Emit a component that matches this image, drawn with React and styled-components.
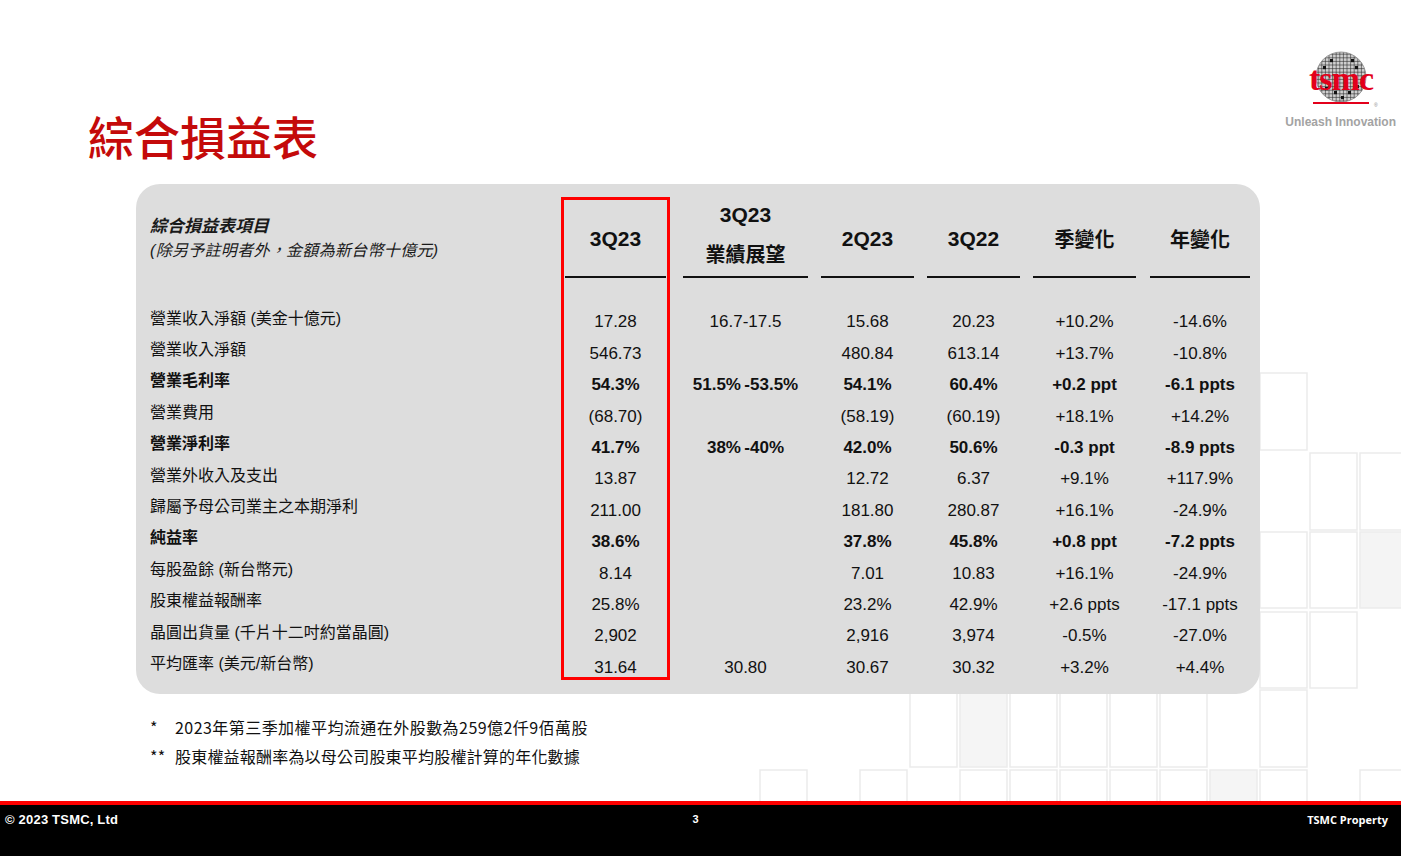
import React from 'react';
import styled, { createGlobalStyle } from 'styled-components';

const GlobalStyle = createGlobalStyle`
  html, body { margin: 0; padding: 0; background: #ffffff; }
  body { font-family: "Liberation Sans", "Noto Sans CJK TC", sans-serif; color: #111; }
  * { box-sizing: border-box; }
`;

const Page = styled.div`
  position: relative;
  width: 1401px;
  height: 856px;
  overflow: hidden;
  display: flex;
  flex-direction: column;
  background: #ffffff;
`;

const Backdrop = styled.svg`
  position: absolute;
  left: 0;
  top: 0;
  width: 1401px;
  height: 856px;
  pointer-events: none;
`;

const Content = styled.div`
  position: relative;
  z-index: 1;
  display: flex;
  flex-direction: column;
  flex: 1;
`;

const Header = styled.header`
  display: flex;
  justify-content: space-between;
  align-items: flex-start;
  height: 184px;
  flex-shrink: 0;
`;

const Title = styled.h1`
  margin: 112px 0 0 88px;
  font-family: "Noto Sans CJK TC", sans-serif;
  font-size: 46px;
  line-height: 46px;
  font-weight: 500;
  color: #c40a0a;
`;

const LogoBlock = styled.div`
  margin: 50px 5px 0 0;
  display: flex;
  flex-direction: column;
  align-items: center;
`;

const Tagline = styled.div`
  margin-top: 7px;
  font-family: "Liberation Sans", sans-serif;
  font-size: 12px;
  line-height: 14px;
  font-weight: 700;
  color: #a3a3a3;
`;

const Panel = styled.section`
  margin-left: 136px;
  width: 1124px;
  height: 510px;
  flex-shrink: 0;
  padding: 13px 0 14px 0;
  background: #dddddd;
  border-radius: 24px;
  display: flex;
`;

const LabelColumn = styled.div`
  width: 425px;
  flex-shrink: 0;
  padding: 3px 0 0 14px;
  display: flex;
  flex-direction: column;
`;

const LabelHead = styled.div`
  height: 78px;
  flex-shrink: 0;
  display: flex;
  flex-direction: column;
  justify-content: center;
  font-style: italic;
  color: #1a1a1a;
`;

const LabelHeadTitle = styled.div`
  font-size: 17px;
  line-height: 24px;
  font-weight: 700;
`;

const LabelHeadNote = styled.div`
  font-size: 16px;
  line-height: 24px;
  letter-spacing: 0.3px;
`;

const DataColumn = styled.div`
  width: ${p => p.$width}px;
  flex-shrink: 0;
  margin-left: ${p => p.$gap}px;
  border: ${p => (p.$highlight ? '3px solid #ff0000' : 'none')};
  padding-top: ${p => (p.$highlight ? 0 : 3)}px;
  display: flex;
  flex-direction: column;
`;

const ColHead = styled.div`
  flex-shrink: 0;
  box-sizing: content-box;
  height: ${p => 76 - (p.$lift || 0)}px;
  padding-bottom: ${p => p.$lift || 0}px;
  margin: 0 ${p => (p.$inset ? 1 : 0)}px;
  border-bottom: 2px solid #111;
  display: flex;
  flex-direction: column;
  align-items: center;
  justify-content: center;
`;

const HeadLatin = styled.div`
  font-family: "Liberation Sans", sans-serif;
  font-size: 21px;
  line-height: 39px;
  font-weight: 700;
  color: #111;
`;

const HeadCjk = styled.div`
  font-family: "Noto Sans CJK TC", sans-serif;
  font-size: 20px;
  line-height: 39px;
  font-weight: 700;
  color: #111;
`;

const Rows = styled.div`
  flex-shrink: 0;
  margin-top: ${p => p.$offset}px;
  display: flex;
  flex-direction: column;
`;

const Cell = styled.div`
  flex-shrink: 0;
  height: 31.4px;
  display: flex;
  align-items: center;
  justify-content: ${p => (p.$align === 'left' ? 'flex-start' : 'center')};
  white-space: nowrap;
  font-size: ${p => p.$size}px;
  font-weight: ${p => (p.$bold ? 700 : 400)};
  color: #111;
`;

const Notes = styled.div`
  margin: 19px 0 0 150px;
  font-family: "Noto Sans CJK TC", sans-serif;
  font-size: 16px;
  line-height: 29px;
  color: #111;
`;

const NoteLine = styled.div`
  display: grid;
  grid-template-columns: 25px auto;
  letter-spacing: ${p => p.$track}px;
`;

const Footer = styled.footer`
  margin-top: auto;
  height: 55px;
  flex-shrink: 0;
  border-top: 4px solid #ff0000;
  background: #000;
  color: #fff;
  display: grid;
  grid-template-columns: 1fr auto 1fr;
  align-items: start;
  padding: 7px 13px 0 5px;
`;

const FootLeft = styled.div`
  font-family: "Liberation Sans", sans-serif;
  font-size: 13px;
  line-height: 15px;
  font-weight: 700;
  letter-spacing: 0.2px;
`;

const FootPage = styled.div`
  font-family: "Liberation Sans", sans-serif;
  font-size: 11px;
  line-height: 15px;
  font-weight: 700;
  margin-right: 2px;
`;

const FootRight = styled.div`
  justify-self: end;
  font-family: "Open Sans", sans-serif;
  font-size: 11px;
  line-height: 15px;
  font-weight: 700;
`;

const columns = [
  { width: 109, gap: 0, highlight: true, head: [['3Q23', 'latin']] },
  { width: 125, gap: 13, head: [['3Q23', 'latin'], ['業績展望', 'cjk']], lift: 9 },
  { width: 93, gap: 13, head: [['2Q23', 'latin']] },
  { width: 93, gap: 13, head: [['3Q22', 'latin']] },
  { width: 103, gap: 13, head: [['季變化', 'cjk']] },
  { width: 100, gap: 14, head: [['年變化', 'cjk']] },
];

const rows = [
  { label: '營業收入淨額 (美金十億元)', v: ['17.28', '16.7-17.5', '15.68', '20.23', '+10.2%', '-14.6%'] },
  { label: '營業收入淨額', v: ['546.73', '', '480.84', '613.14', '+13.7%', '-10.8%'] },
  { label: '營業毛利率', bold: true, v: ['54.3%', '51.5%\u2009-53.5%', '54.1%', '60.4%', '+0.2 ppt', '-6.1 ppts'] },
  { label: '營業費用', v: ['(68.70)', '', '(58.19)', '(60.19)', '+18.1%', '+14.2%'] },
  { label: '營業淨利率', bold: true, v: ['41.7%', '38%\u2009-40%', '42.0%', '50.6%', '-0.3 ppt', '-8.9 ppts'] },
  { label: '營業外收入及支出', v: ['13.87', '', '12.72', '6.37', '+9.1%', '+117.9%'] },
  { label: '歸屬予母公司業主之本期淨利', v: ['211.00', '', '181.80', '280.87', '+16.1%', '-24.9%'] },
  { label: '純益率', bold: true, v: ['38.6%', '', '37.8%', '45.8%', '+0.8 ppt', '-7.2 ppts'] },
  { label: '每股盈餘 (新台幣元)', v: ['8.14', '', '7.01', '10.83', '+16.1%', '-24.9%'] },
  { label: '股東權益報酬率', v: ['25.8%', '', '23.2%', '42.9%', '+2.6 ppts', '-17.1 ppts'] },
  { label: '晶圓出貨量 (千片十二吋約當晶圓)', v: ['2,902', '', '2,916', '3,974', '-0.5%', '-27.0%'] },
  { label: '平均匯率 (美元/新台幣)', v: ['31.64', '30.80', '30.67', '30.32', '+3.2%', '+4.4%'] },
];

const tiles = [
  [1260, 373, 47, 77],
  [1310, 453, 47, 77], [1360, 453, 45, 77],
  [1260, 532, 47, 76], [1310, 532, 47, 76], [1360, 532, 45, 76, '#f4f4f4'],
  [1260, 612, 47, 76], [1310, 612, 47, 76],
  [910, 690, 47, 77], [960, 690, 47, 77, '#f5f5f5'], [1010, 690, 47, 77], [1060, 690, 47, 77],
  [1110, 690, 47, 77], [1160, 690, 47, 77], [1260, 690, 47, 77],
  [760, 770, 47, 34], [860, 770, 47, 34], [960, 770, 47, 34], [1010, 770, 47, 34],
  [1060, 770, 47, 34], [1110, 770, 47, 34], [1160, 770, 47, 34], [1210, 770, 47, 34, '#f5f5f5'],
  [1260, 770, 47, 34], [1360, 770, 45, 34],
];

function Logo() {
  const lines = [];
  for (let i = -30; i <= 30; i += 3.6) {
    lines.push(<line key={'v' + i} x1={40 + i} y1="0" x2={40 + i} y2="60" />);
    lines.push(<line key={'h' + i} x1="0" y1={27 + i} x2="80" y2={27 + i} />);
  }
  const dies = [[29, 9], [50, 9], [22, 16], [54, 16], [24, 37], [33, 41], [47, 41], [55, 35], [40, 46]];
  return (
    <svg width="80" height="58" viewBox="0 0 80 58">
      <defs>
        <clipPath id="waferClip">
          <circle cx="40" cy="27" r="25" />
        </clipPath>
      </defs>
      <circle cx="40" cy="27" r="25" fill="#cfcfcf" />
      <g clipPath="url(#waferClip)" stroke="#2f2f2f" strokeWidth="0.6">
        {lines}
      </g>
      <g fill="#111">
        {dies.map(([x, y], i) => (
          <rect key={i} x={x} y={y} width="3" height="3.2" />
        ))}
      </g>
      <circle cx="40" cy="27" r="25" fill="none" stroke="#8a8a8a" strokeWidth="0.8" />
      <text
        x="40"
        y="40"
        textAnchor="middle"
        fontFamily="Liberation Serif, serif"
        fontWeight="700"
        fontSize="34"
        letterSpacing="-1"
        fill="#e3001b"
      >
        tsmc
      </text>
      <rect x="12" y="52" width="56" height="2" fill="#e3001b" />
      <text x="73" y="57" fontSize="5" fill="#888" fontFamily="Liberation Sans, sans-serif">®</text>
    </svg>
  );
}

export default function App() {
  return (
    <>
      <GlobalStyle />
      <Page>
        <Backdrop viewBox="0 0 1401 856">
          {tiles.map(([x, y, w, h, f], i) => (
            <rect key={i} x={x} y={y} width={w} height={h} fill={f || '#ffffff'} stroke="#ebebeb" strokeWidth="1.5" />
          ))}
        </Backdrop>
        <Content>
          <Header>
            <Title>綜合損益表</Title>
            <LogoBlock>
              <Logo />
              <Tagline>Unleash Innovation</Tagline>
            </LogoBlock>
          </Header>

          <Panel>
            <LabelColumn>
              <LabelHead>
                <LabelHeadTitle>綜合損益表項目</LabelHeadTitle>
                <LabelHeadNote>(除另予註明者外，金額為新台幣十億元)</LabelHeadNote>
              </LabelHead>
              <Rows $offset={23}>
                {rows.map(r => (
                  <Cell key={r.label} $align="left" $size={16} $bold={r.bold}>
                    {r.label}
                  </Cell>
                ))}
              </Rows>
            </LabelColumn>

            {columns.map((c, ci) => (
              <DataColumn key={ci} $width={c.width} $gap={c.gap} $highlight={c.highlight}>
                <ColHead $lift={c.lift} $inset={c.highlight}>
                  {c.head.map(([t, kind]) =>
                    kind === 'latin' ? <HeadLatin key={t}>{t}</HeadLatin> : <HeadCjk key={t}>{t}</HeadCjk>
                  )}
                </ColHead>
                <Rows $offset={28.8}>
                  {rows.map(r => (
                    <Cell key={r.label} $size={17} $bold={r.bold}>
                      {r.v[ci]}
                    </Cell>
                  ))}
                </Rows>
              </DataColumn>
            ))}
          </Panel>

          <Notes>
            <NoteLine $track={0.45}>
              <span>*</span>
              <span>2023年第三季加權平均流通在外股數為259億2仟9佰萬股</span>
            </NoteLine>
            <NoteLine $track={0.2}>
              <span>**</span>
              <span>股東權益報酬率為以母公司股東平均股權計算的年化數據</span>
            </NoteLine>
          </Notes>

          <Footer>
            <FootLeft>© 2023 TSMC, Ltd</FootLeft>
            <FootPage>3</FootPage>
            <FootRight>TSMC Property</FootRight>
          </Footer>
        </Content>
      </Page>
    </>
  );
}
